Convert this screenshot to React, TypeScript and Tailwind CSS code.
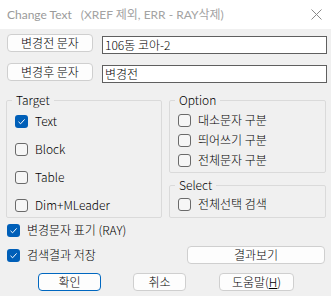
import React from "react";

const KR = { fontFamily: '"Noto Sans CJK KR", "Noto Sans", sans-serif' };

function Box({ checked }: { checked?: boolean }) {
  if (checked) {
    return (
      <span className="flex h-[13px] w-[13px] shrink-0 items-center justify-center rounded-[3px] bg-[#005fb8]">
        <svg width="13" height="13" viewBox="0 0 13 13">
          <path d="M3.5 6.8 L5.6 8.8 L9.6 4.4" fill="none" stroke="#ffffff" strokeWidth="1" />
        </svg>
      </span>
    );
  }
  return <span className="block h-[13px] w-[13px] shrink-0 rounded-[3px] border border-[#6a6a6a] bg-[#f6f6f6]" />;
}

function Check({ label, checked }: { label: React.ReactNode; checked?: boolean }) {
  return (
    <div className="flex h-[14px] items-center gap-[7px] text-[12px] font-light leading-[14px] text-black">
      <Box checked={checked} />
      <span>{label}</span>
    </div>
  );
}

function Btn({ children, className = "" }: { children: React.ReactNode; className?: string }) {
  return (
    <div
      className={
        "flex items-center justify-center rounded-[4px] border bg-[#fdfdfd] text-[12px] font-light leading-[14px] text-black " +
        className
      }
    >
      {children}
    </div>
  );
}

function Group({ title, className = "", children }: { title: string; className?: string; children: React.ReactNode }) {
  return (
    <fieldset className={"rounded-[2px] border border-[#dadada] " + className}>
      <legend className="ml-[5px] px-[4px] text-[12px] font-light leading-[14px] text-black">{title}</legend>
      {children}
    </fieldset>
  );
}

export default function App() {
  return (
    <div className="h-[296px] w-[331px] overflow-hidden bg-[#f0f0f0]" style={KR}>
      {/* title bar */}
      <div className="flex h-[29px] items-center bg-white pl-[7px] pr-[9px]">
        <span className="text-[12px] text-[#9a9a9a]" style={{ fontFamily: '"Lato", "Noto Sans CJK KR", sans-serif' }}>
          Change Text
        </span>
        <span className="ml-[9px] text-[12px] text-[#a3a3a3]" style={{ fontFamily: '"Lato", "Noto Sans CJK KR", sans-serif' }}>
          (XREF 제외, ERR - RAY삭제)
        </span>
        <div className="ml-auto">
          <svg width="11" height="11" viewBox="0 0 11 11">
            <path d="M0.5 0.5 L10.5 10.5 M10.5 0.5 L0.5 10.5" stroke="#8a8a8a" strokeWidth="1" />
          </svg>
        </div>
      </div>

      {/* rows */}
      <div className="mt-[5px] flex items-start pl-[7px]">
        <Btn className="h-[18px] w-[86px] border-[#cfcfcf]">변경전 문자</Btn>
        <div className="ml-[9px] mt-[2px] flex h-[18px] w-[225px] items-center border border-[#5f5f5f] bg-white pl-[2px] text-[12px] font-light leading-[14px]">
          106동 코아-2
        </div>
      </div>
      <div className="mt-[9px] flex items-start pl-[7px]">
        <Btn className="h-[18px] w-[86px] border-[#cfcfcf]">변경후 문자</Btn>
        <div className="ml-[9px] mt-[2px] flex h-[18px] w-[225px] items-center border border-[#5f5f5f] bg-white pl-[2px] text-[12px] font-light leading-[14px]">
          변경전
        </div>
      </div>

      {/* groups */}
      <div className="mt-[10px] flex gap-[7px] pl-[6px]">
        <Group title="Target" className="h-[125px] w-[156px]">
          <div className="flex flex-col gap-[14px] pl-[8px] pt-[7px]">
            <Check label="Text" checked />
            <Check label="Block" />
            <Check label="Table" />
            <Check label="Dim+MLeader" />
          </div>
        </Group>
        <div className="flex w-[157px] flex-col gap-[5px]">
          <Group title="Option" className="h-[80px]">
            <div className="flex flex-col gap-[6px] pl-[8px] pt-[6px]">
              <Check label="대소문자 구분" />
              <Check label="띄어쓰기 구분" />
              <Check label="전체문자 구분" />
            </div>
          </Group>
          <Group title="Select" className="h-[40px]">
            <div className="pl-[8px] pt-[5px]">
              <Check label="전체선택 검색" />
            </div>
          </Group>
        </div>
      </div>

      {/* bottom checks */}
      <div className="mt-[5px] pl-[7px]">
        <Check label="변경문자 표기 (RAY)" checked />
      </div>
      <div className="mt-[9px] flex items-center pl-[7px] pr-[6px]">
        <Check label="검색결과 저장" checked />
        <Btn className="ml-auto h-[18px] w-[138px] border-[#cfcfcf]">결과보기</Btn>
      </div>

      {/* buttons */}
      <div className="mt-[9px] flex pl-[38px]">
        <Btn className="h-[18px] w-[63px] border-[#0067c0]">확인</Btn>
        <Btn className="ml-[32px] h-[18px] w-[53px] border-[#cfcfcf]">취소</Btn>
        <Btn className="ml-[33px] h-[18px] w-[75px] border-[#cfcfcf]">
          도움말(<span className="underline underline-offset-[1px]">H</span>)
        </Btn>
      </div>
    </div>
  );
}
